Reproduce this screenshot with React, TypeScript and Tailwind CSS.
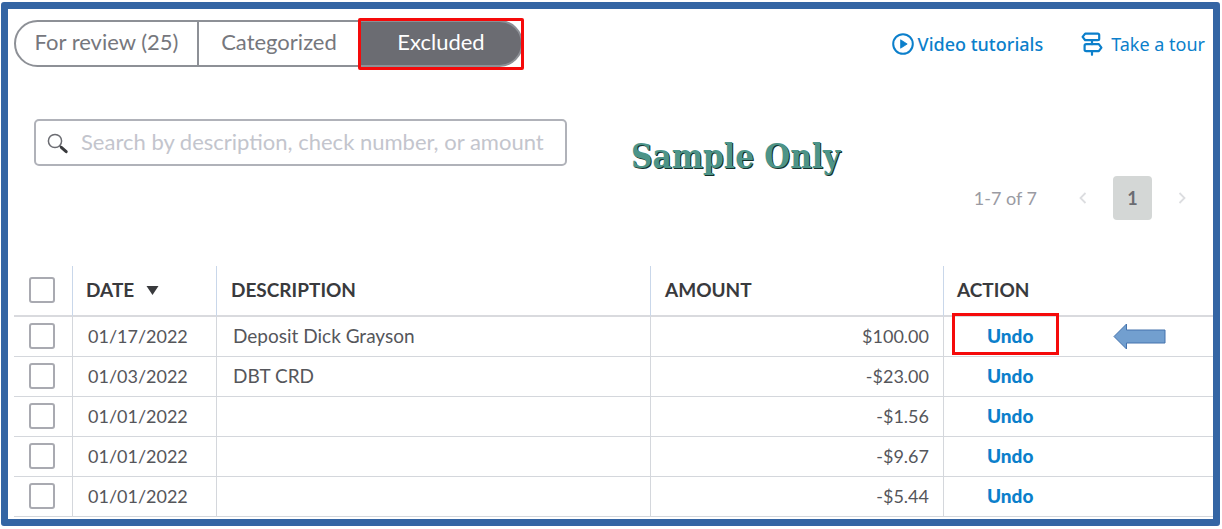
import React from 'react';

interface Transaction {
  id: number;
  date: string;
  description: string;
  amount: string;
  highlighted?: boolean;
}

const transactions: Transaction[] = [
  { id: 1, date: '01/17/2022', description: 'Deposit Dick Grayson', amount: '$100.00', highlighted: true },
  { id: 2, date: '01/03/2022', description: 'DBT CRD', amount: '-$23.00' },
  { id: 3, date: '01/01/2022', description: '', amount: '-$1.56' },
  { id: 4, date: '01/01/2022', description: '', amount: '-$9.67' },
  { id: 5, date: '01/01/2022', description: '', amount: '-$5.44' },
];

const PlayIcon = () => (
  <svg className="w-[22px] h-[22px]" viewBox="0 0 22 22" fill="none" aria-hidden="true">
    <circle cx="11" cy="11" r="9.8" stroke="currentColor" strokeWidth="2" />
    <path d="M8.6 6.8v8.4L15.2 11z" fill="currentColor" stroke="currentColor" strokeWidth="0.8" strokeLinejoin="round" />
  </svg>
);

const SignpostIcon = () => (
  <svg className="w-[22px] h-6" viewBox="0 0 22 24" fill="none" stroke="currentColor" strokeWidth="2.2" strokeLinejoin="round" strokeLinecap="round" aria-hidden="true">
    <path d="M4.2 1.6h12.6a1.4 1.4 0 0 1 1.4 1.4v3.8a1.4 1.4 0 0 1-1.4 1.4H4.2L1.6 4.9z" />
    <path d="M17.8 12.2H5.2a1.6 1.6 0 0 0-1.6 1.6v3.8a1.6 1.6 0 0 0 1.6 1.6h12.6l2.6-3.5z" />
    <path d="M11 8.2v4M11 19.2v3.6" />
  </svg>
);

const SearchIcon = () => (
  <svg className="w-[22px] h-[22px] shrink-0" viewBox="0 0 22 22" fill="none" aria-hidden="true">
    <circle cx="8" cy="9" r="6.6" stroke="#6b6c72" strokeWidth="1.5" />
    <path d="M12.8 13.8l1.6 1.6" stroke="#55565b" strokeWidth="1.5" />
    <path d="M14.3 15.3l4.9 4.4" stroke="#393a3d" strokeWidth="3" strokeLinecap="round" />
  </svg>
);

const Chevron = ({ d }: { d: string }) => (
  <svg className="w-2 h-3" viewBox="0 0 8 12" fill="none" stroke="#dcdde0" strokeWidth="1.8" aria-hidden="true">
    <path d={d} />
  </svg>
);

const Checkbox = ({ label }: { label: string }) => (
  <input
    type="checkbox"
    aria-label={label}
    className="block w-[26px] h-[26px] ml-[15px] appearance-none rounded-[3px] border-2 border-[#a9aab1] bg-white checked:bg-[#6b6c72]"
  />
);

const App: React.FC = () => {
  return (
    <div className="mx-px mt-0.5 mr-0.5 rounded-[3px] border-7 border-[#3465a4] bg-white pl-1.5 pb-0.5 font-['Lato','Noto_Sans',sans-serif] text-[#55565b]">
      <div className="flex items-center justify-between pt-[11px] pr-2">
        <div className="flex h-[47px] text-[22px] leading-7 text-[#76777d]">
          <button type="button" className="w-[185px] rounded-l-full border-2 border-[#8d9096] pb-1">
            For review (25)
          </button>
          <button type="button" className="w-[160px] border-y-2 border-[#8d9096] pb-1">
            Categorized
          </button>
          <div className="relative w-[164px]">
            <button type="button" className="h-full w-full rounded-r-full border-2 border-[#8d9096] bg-[#6b6c72] pb-1 text-white">
              Excluded
            </button>
            <span className="pointer-events-none absolute -inset-x-px -top-0.5 -bottom-[3px] rounded-[2px] border-3 border-[#f50a0a]" />
          </div>
        </div>

        <nav className="flex items-center gap-[38px] font-['Noto_Sans',sans-serif] text-lg text-[#0b7fcb]">
          <a href="#tutorials" className="flex items-center gap-1 font-medium">
            <PlayIcon />
            Video tutorials
          </a>
          <a href="#tour" className="flex items-center gap-2">
            <SignpostIcon />
            Take a tour
          </a>
        </nav>
      </div>

      <div className="mt-[52px] ml-5 flex h-[101px] items-start">
        <label className="flex h-[47px] w-[533px] items-center gap-3 rounded-[5px] border-2 border-[#b0b2b9] pl-[11px]">
          <SearchIcon />
          <input
            type="text"
            aria-label="Search transactions"
            placeholder="Search by description, check number, or amount"
            className="min-w-0 flex-1 bg-transparent pb-0.5 text-[22px] leading-7 outline-none placeholder:text-[#c3c5cd]"
          />
        </label>

        <p className="mt-4 ml-16 font-['DejaVu_Serif_Condensed','DejaVu_Serif',serif] text-[33px] leading-[44px] font-bold whitespace-nowrap text-[#4d9488] [text-shadow:1px_1px_0_#14302c]">
          Sample Only
        </p>

        <div className="mr-[27px] ml-auto flex items-center self-end text-lg">
          <span className="text-[#9a9ba3]">1-7 of 7</span>
          <button type="button" aria-label="Previous page" className="ml-[42px]">
            <Chevron d="M6.5 1L1.5 6l5 5" />
          </button>
          <button type="button" className="mx-[26px] h-11 w-[39px] rounded-[4px] bg-[#d4d7d6] font-bold text-[#6b6c72]">
            1
          </button>
          <button type="button" aria-label="Next page">
            <Chevron d="M1.5 1l5 5-5 5" />
          </button>
        </div>
      </div>

      <table className="mt-[46px] w-full table-fixed border-separate border-spacing-0 text-lg">
        <colgroup>
          <col className="w-[59px]" />
          <col className="w-36" />
          <col />
          <col className="w-[293px]" />
          <col className="w-[269px]" />
        </colgroup>
        <thead>
          <tr className="h-[51px] text-left text-[19px] leading-7 text-[#393a3d] *:border-b-2 *:border-b-[#d9dade] *:p-0 *:pb-0.5 [&>:not(:last-child)]:border-r [&>:not(:last-child)]:border-r-[#c9d7ea]">
            <th scope="col"><Checkbox label="Select all" /></th>
            <th scope="col">
              <button type="button" className="flex items-center gap-3 pl-[13px]">
                DATE
                <svg className="mt-0.5 w-[13px] h-[9px]" viewBox="0 0 12 9" fill="currentColor" aria-hidden="true">
                  <path d="M0 0h12L6 9z" />
                </svg>
              </button>
            </th>
            <th scope="col"><span className="pl-3.5">DESCRIPTION</span></th>
            <th scope="col"><span className="pl-3.5">AMOUNT</span></th>
            <th scope="col"><span className="pl-[13px]">ACTION</span></th>
          </tr>
        </thead>
        <tbody>
          {transactions.map((t) => (
            <tr key={t.id} className="h-10 *:border-b *:border-[#d4d7dc] *:p-0 *:pb-px [&>:not(:last-child)]:border-r">
              <td><Checkbox label={`Select transaction ${t.id}`} /></td>
              <td><span className="pl-[15px]">{t.date}</span></td>
              <td className="text-[19px] leading-7"><span className="pl-4">{t.description}</span></td>
              <td className="text-right"><span className="pr-3.5">{t.amount}</span></td>
              <td>
                <div className="flex items-center pl-[43px]">
                  <button type="button" className="relative text-[19px] leading-7 font-black text-[#0b7fcb]">
                    Undo
                    {t.highlighted && (
                      <span className="pointer-events-none absolute -top-[9px] -right-[26px] -bottom-[5px] -left-[35px] border-3 border-[#f50a0a]" />
                    )}
                  </button>
                  {t.highlighted && (
                    <svg className="ml-20 w-[53px] h-[27px]" viewBox="0 0 53 27" aria-hidden="true">
                      <path d="M1 13.5L13.5 1v6H52v13H13.5v6z" fill="#729fcf" stroke="#4573ad" />
                    </svg>
                  )}
                </div>
              </td>
            </tr>
          ))}
        </tbody>
      </table>
    </div>
  );
};

export default App;
